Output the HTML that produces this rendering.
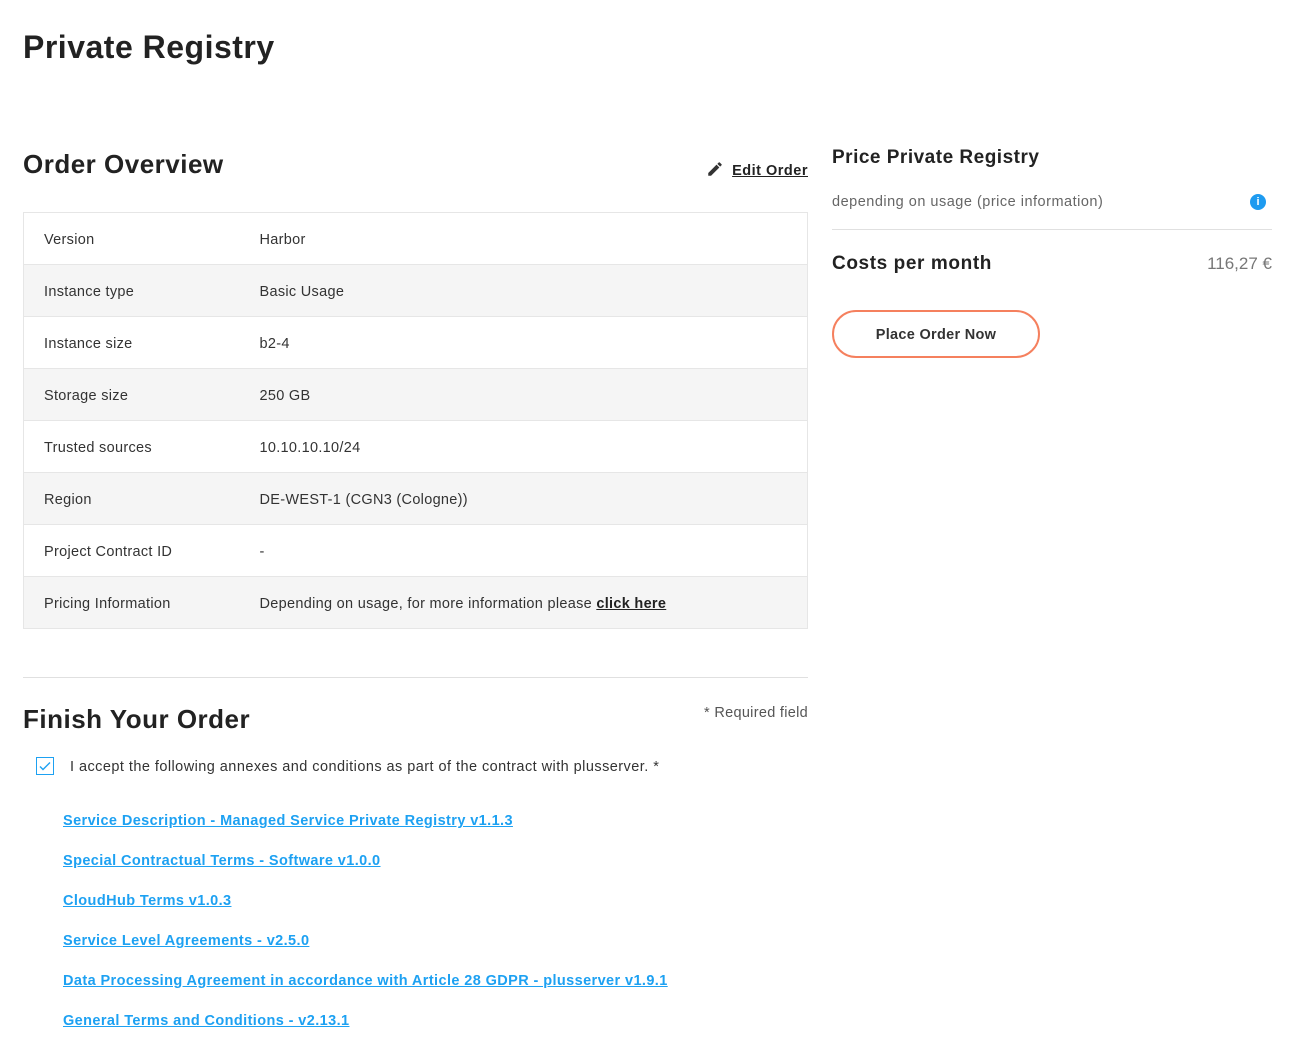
<!DOCTYPE html>
<html><head><meta charset="utf-8"><style>
body{margin:0;background:#fff;font-family:"Liberation Sans",sans-serif;color:#222;}
.a{position:absolute;white-space:nowrap}
h1{position:absolute;left:23px;top:29px;margin:0;font-size:32px;font-weight:bold;letter-spacing:0.5px}
.h2{font-size:26px;font-weight:bold;letter-spacing:0.5px}
table{position:absolute;left:23px;top:212px;width:785px;border-collapse:collapse;font-size:14.5px;color:#333;letter-spacing:0.3px}
td{height:52px;border-top:1px solid #e6e6e6;padding:3px 0 0 0;box-sizing:border-box}
tr{border-left:1px solid #e6e6e6;border-right:1px solid #e6e6e6}
tr:last-child td{border-bottom:1px solid #e6e6e6}
tr:nth-child(even){background:#f5f5f5}
td:first-child{padding-left:20px;width:236px}
.lk{position:absolute;left:63px;color:#1da1f2;font-weight:bold;font-size:14.5px;text-decoration:underline;white-space:nowrap;letter-spacing:0.4px}
</style></head><body>
<h1>Private Registry</h1>
<div class="a h2" style="left:23px;top:149px">Order Overview</div>
<div class="a" style="right:498px;top:160px;font-size:14.5px;font-weight:bold;text-decoration:underline;letter-spacing:0.5px">
<svg width="18" height="18" viewBox="0 0 24 24" style="vertical-align:-3px;margin-right:8px"><path d="M3 17.25V21h3.75L17.81 9.94l-3.75-3.75L3 17.25zM20.71 7.04a1 1 0 000-1.41l-2.34-2.34a1 1 0 00-1.41 0l-1.83 1.83 3.75 3.75 1.83-1.83z" fill="#333"/></svg>Edit Order</div>
<table>
<tr><td>Version</td><td>Harbor</td></tr>
<tr><td>Instance type</td><td>Basic Usage</td></tr>
<tr><td>Instance size</td><td>b2-4</td></tr>
<tr><td>Storage size</td><td>250 GB</td></tr>
<tr><td>Trusted sources</td><td>10.10.10.10/24</td></tr>
<tr><td>Region</td><td>DE-WEST-1 (CGN3 (Cologne))</td></tr>
<tr><td>Project Contract ID</td><td>-</td></tr>
<tr><td>Pricing Information</td><td>Depending on usage, for more information please <b style="text-decoration:underline;color:#222">click here</b></td></tr>
</table>
<div class="a" style="left:23px;top:677px;width:785px;border-top:1px solid #e0e0e0"></div>
<div class="a h2" style="left:23px;top:704px">Finish Your Order</div>
<div class="a" style="right:498px;top:705px;font-size:14.5px;color:#555;letter-spacing:0.3px">* Required field</div>
<div class="a" style="left:36px;top:757px;width:16px;height:16px;border:1px solid #1da1f2"><svg width="16" height="16" viewBox="0 0 16 16"><path d="M3 8.5l3 3 7-7" stroke="#1da1f2" stroke-width="1.4" fill="none"/></svg></div>
<div class="a" style="left:70px;top:759px;font-size:14.5px;color:#333;letter-spacing:0.45px">I accept the following annexes and conditions as part of the contract with plusserver. *</div>
<div class="lk" style="top:813px">Service Description - Managed Service Private Registry v1.1.3</div>
<div class="lk" style="top:853px">Special Contractual Terms - Software v1.0.0</div>
<div class="lk" style="top:893px">CloudHub Terms v1.0.3</div>
<div class="lk" style="top:933px">Service Level Agreements - v2.5.0</div>
<div class="lk" style="top:973px">Data Processing Agreement in accordance with Article 28 GDPR - plusserver v1.9.1</div>
<div class="lk" style="top:1013px">General Terms and Conditions - v2.13.1</div>

<div class="a" style="left:832px;top:147px;font-size:19px;font-weight:bold;letter-spacing:0.5px">Price Private Registry</div>
<div class="a" style="left:832px;top:194px;font-size:14.5px;color:#666;letter-spacing:0.5px">depending on usage (price information)</div>
<div class="a" style="left:1250px;top:194px;width:16px;height:16px;border-radius:50%;background:#1e9bf0;color:#fff;font-size:11px;font-weight:bold;text-align:center;line-height:16px">i</div>
<div class="a" style="left:832px;top:229px;width:440px;border-top:1px solid #e0e0e0"></div>
<div class="a" style="left:832px;top:253px;font-size:19px;font-weight:bold;letter-spacing:0.6px">Costs per month</div>
<div class="a" style="right:34px;top:254px;font-size:17px;color:#777">116,27 €</div>
<div class="a" style="left:832px;top:310px;width:204px;height:44px;border:2px solid #f5805e;border-radius:24px;text-align:center;line-height:46px;font-size:14.5px;font-weight:bold;color:#333;letter-spacing:0.3px">Place Order Now</div>
</body></html>
